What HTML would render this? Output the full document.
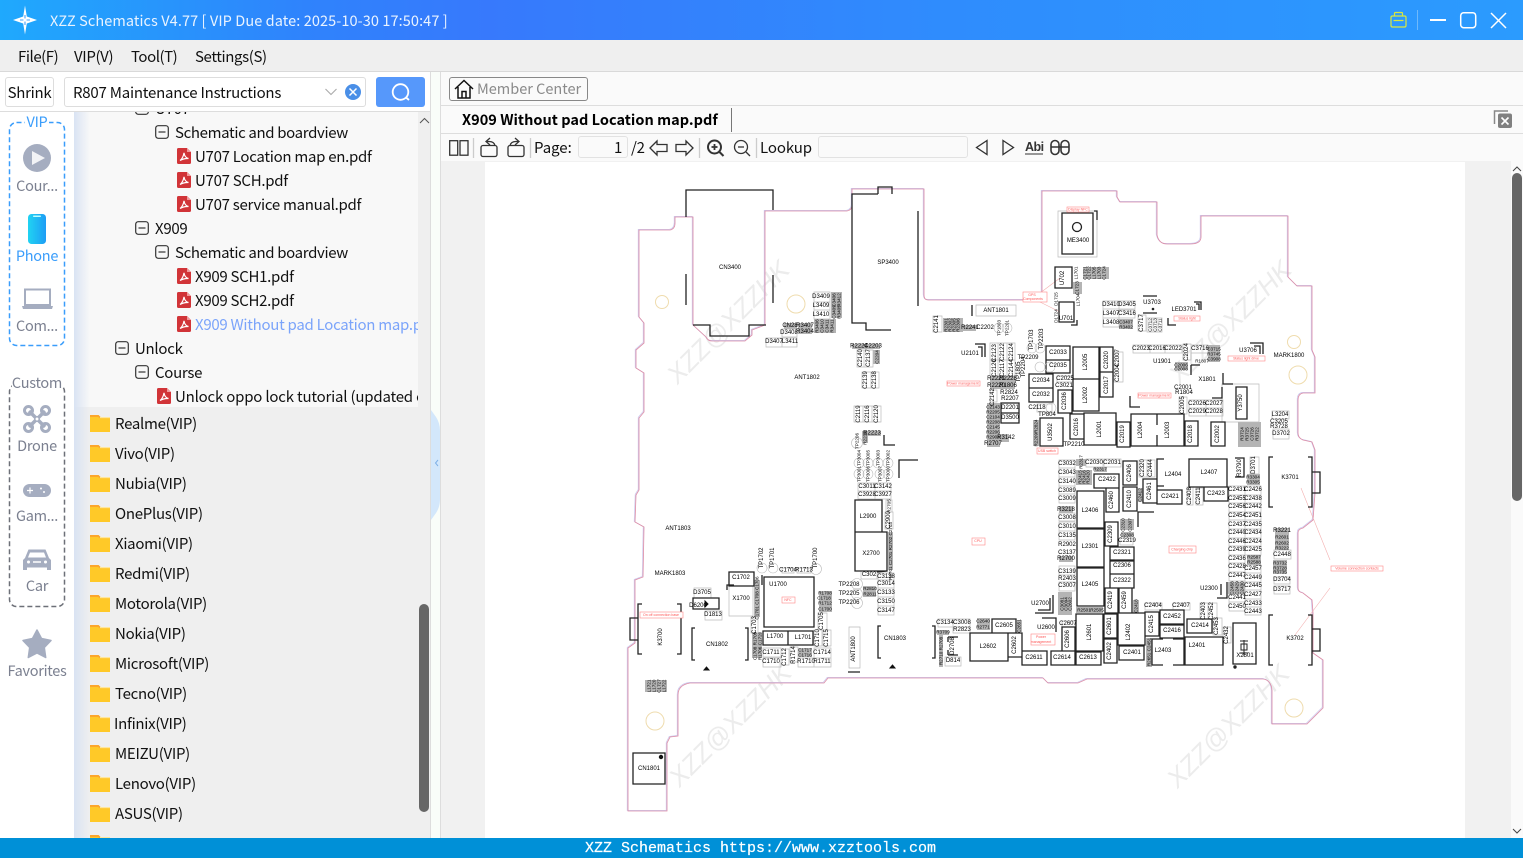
<!DOCTYPE html>
<html lang="en"><head><meta charset="utf-8"><title>XZZ Schematics</title>
<style>
*{box-sizing:border-box}
html,body{margin:0;padding:0;width:1523px;height:858px;overflow:hidden;background:#fafafa}
body{position:relative;font-family:"Noto Sans CJK SC","Liberation Sans",sans-serif;color:#111;font-size:15px;letter-spacing:-.28px}
.a{position:absolute}
.t{position:absolute;white-space:nowrap;line-height:20px;height:20px}
.s{text-align:center;width:74px;left:0;color:#7b8090;font-size:14.5px}
svg{display:block}
#b text{font:6px "Liberation Sans",sans-serif;letter-spacing:0;fill:#000;text-anchor:middle;dominant-baseline:central}
#b text.r{fill:#f55;font-size:3.5px}
#b text.w{font:italic 26px "Liberation Sans",sans-serif;fill:#ececec}
#b text.m{font-size:4.6px}
.k{fill:none;stroke:#222;stroke-width:1.3}
.g{fill:none;stroke:#bbb;stroke-width:.7}
.d{fill:#b4b4b4}
.o{fill:none;stroke:#dd8fa8;stroke-width:.85}
.o2{fill:none;stroke:#c9c8ee;stroke-width:.7}
.c{fill:none;stroke:#efdcae;stroke-width:1}
.rl{fill:#fff;stroke:#f88;stroke-width:.6}
</style></head><body>
<svg width="0" height="0" style="position:absolute"><defs>
<symbol id="pdf" viewBox="0 0 14 16"><path d="M0 1.500Q0 0 1.500 0H10L14 4V14.500Q14 16 12.500 16H1.500Q0 16 0 14.500Z" fill="#d13438"/><path d="M10 0V4H14Z" fill="#f19a9c"/><path d="M3 12.500C5 11 6.500 8 7 4.800C7.500 8 9 10 11.500 10.500C8.500 10.300 5.500 11 3 12.500Z" fill="none" stroke="#fff" stroke-width="1.200"/></symbol>
<symbol id="fo" viewBox="0 0 20 17"><path d="M0 0H8.500L10.500 2H20V17H0Z" fill="#ffc928"/><path d="M0 0H8.500L10.500 2H20V3.200H10L8 2H0Z" fill="#fca62c"/><path d="M10 2H20V3.200H10Z" fill="#ffe79a"/></symbol>
<symbol id="mn" viewBox="0 0 14 14"><rect x=".7" y=".7" width="12.600" height="12.600" rx="2.500" fill="none" stroke="#333" stroke-width="1.200"/><path d="M3.500 7H10.500" stroke="#333" stroke-width="1.200"/></symbol>
<linearGradient id="ph" x1="0" x2="1" y1="0" y2="0"><stop offset="0" stop-color="#20d3f2"/><stop offset="1" stop-color="#1e9df5"/></linearGradient>
</defs></svg>

<!-- title bar -->
<div class="a" style="left:0;top:0;width:1523px;height:40px;background:linear-gradient(90deg,#1fa9fd 0,#2f83fc 20%,#3779fc 32%,#2f8cfd 62%,#2b9bfe 100%)"></div>
<svg class="a" style="left:0;top:0" width="50" height="40"><path d="M25 5.500L26.800 16.500L37 20L26.800 23.500L25 34.500L23.200 23.500L13 20L23.200 16.500Z" fill="#fff"/><path d="M25 15V25M20 20H30" stroke="#4aa0f7" stroke-width="1.100"/><circle cx="25" cy="20" r="1.600" fill="#fff"/></svg>
<div class="t" style="left:50px;top:11px;color:#e9f3ff;font-size:14.5px;letter-spacing:.09px">XZZ Schematics V4.77 [ VIP Due date: 2025-10-30 17:50:47 ]</div>
<svg class="a" style="left:1385px;top:5px" width="130" height="30" viewBox="1385 5 130 30">
<path d="M1391 17.500Q1391 16 1392.500 16H1404.500Q1406 16 1406 17.500V25.500Q1406 27 1404.500 27H1392.500Q1391 27 1391 25.500ZM1394.500 16V13.500Q1394.500 12.500 1395.500 12.500H1401.500Q1402.500 12.500 1402.500 13.500V16M1393.500 20.500H1403.500" fill="none" stroke="#d9e83e" stroke-width="1.200"/>
<path d="M1417.500 10V30" stroke="#6fb9fb"/><path d="M1430 20H1446" stroke="#fff" stroke-width="2"/>
<rect x="1460.700" y="12.700" width="15" height="15" rx="3" fill="none" stroke="#fff" stroke-width="1.500"/>
<path d="M1491 13L1506 28M1506 13L1491 28" stroke="#fff" stroke-width="1.500"/></svg>

<!-- menu -->
<div class="a" style="left:0;top:40px;width:1523px;height:32px;background:#efefef;border-bottom:1px solid #d9d9d9"></div>
<div class="t" style="left:18px;top:47px;letter-spacing:-.45px">File(F)</div><div class="t" style="left:74px;top:47px;letter-spacing:-.35px">VIP(V)</div><div class="t" style="left:131px;top:47px;letter-spacing:-.45px">Tool(T)</div><div class="t" style="left:195px;top:47px;letter-spacing:-.38px">Settings(S)</div>

<!-- left column -->
<div class="a" style="left:0;top:72px;width:431px;height:766px;background:#fff"></div>
<div class="a" style="left:5px;top:77px;width:49px;height:30px;border:1px solid #ddd;border-radius:3px;background:#fff;text-align:center;line-height:30px">Shrink</div>
<div class="a" style="left:64px;top:77px;width:302px;height:30px;border:1px solid #ddd;border-radius:3px;background:#fff"></div>
<div class="t" style="left:73px;top:83px;letter-spacing:-.22px">R807 Maintenance Instructions</div>
<svg class="a" style="left:320px;top:80px" width="45" height="24"><path d="M5.500 9L11 14.500L16.500 9" fill="none" stroke="#aaa" stroke-width="1.100"/><circle cx="33" cy="12" r="8" fill="#4a8fe7"/><path d="M29.500 8.500L36.500 15.500M36.500 8.500L29.500 15.500" stroke="#fff" stroke-width="1.500"/></svg>
<div class="a" style="left:376px;top:77px;width:49px;height:30px;border-radius:3px;background:#5698fb"></div>
<svg class="a" style="left:376px;top:77px" width="49" height="30"><circle cx="24.500" cy="15" r="7.800" fill="none" stroke="#fff" stroke-width="1.800"/><path d="M30 20.500L33 23" stroke="#fff" stroke-width="1.800"/></svg>
<div class="a" style="left:0;top:111px;width:431px;height:1px;background:#ddd"></div>

<!-- list bg -->
<div class="a" style="left:74px;top:112px;width:357px;height:726px;background:#efefef"></div>
<div class="a" style="left:74px;top:112px;width:344px;height:295px;background:#f8f8f8;overflow:hidden">
  <svg class="a" style="left:61px;top:-11px" width="14" height="14"><use href="#mn"/></svg>
  <div class="t" style="left:81px;top:-13px">U707</div>
  <svg class="a" style="left:81px;top:13px" width="14" height="14"><use href="#mn"/></svg><div class="t" style="left:101px;top:11px;letter-spacing:-.35px">Schematic and boardview</div>
  <svg class="a" style="left:103px;top:36px" width="14" height="16"><use href="#pdf"/></svg><div class="t" style="left:121px;top:35px">U707 Location map en.pdf</div>
  <svg class="a" style="left:103px;top:60px" width="14" height="16"><use href="#pdf"/></svg><div class="t" style="left:121px;top:59px">U707 SCH.pdf</div>
  <svg class="a" style="left:103px;top:84px" width="14" height="16"><use href="#pdf"/></svg><div class="t" style="left:121px;top:83px">U707 service manual.pdf</div>
  <svg class="a" style="left:61px;top:109px" width="14" height="14"><use href="#mn"/></svg><div class="t" style="left:81px;top:107px">X909</div>
  <svg class="a" style="left:81px;top:133px" width="14" height="14"><use href="#mn"/></svg><div class="t" style="left:101px;top:131px;letter-spacing:-.35px">Schematic and boardview</div>
  <svg class="a" style="left:103px;top:156px" width="14" height="16"><use href="#pdf"/></svg><div class="t" style="left:121px;top:155px">X909 SCH1.pdf</div>
  <svg class="a" style="left:103px;top:180px" width="14" height="16"><use href="#pdf"/></svg><div class="t" style="left:121px;top:179px">X909 SCH2.pdf</div>
  <svg class="a" style="left:103px;top:204px" width="14" height="16"><use href="#pdf"/></svg><div class="t" style="left:121px;top:203px;color:#7ba4fa">X909 Without pad Location map.pdf</div>
  <svg class="a" style="left:41px;top:229px" width="14" height="14"><use href="#mn"/></svg><div class="t" style="left:61px;top:227px">Unlock</div>
  <svg class="a" style="left:61px;top:253px" width="14" height="14"><use href="#mn"/></svg><div class="t" style="left:81px;top:251px">Course</div>
  <svg class="a" style="left:83px;top:276px" width="14" height="16"><use href="#pdf"/></svg><div class="t" style="left:101px;top:275px;letter-spacing:-.2px">Unlock oppo lock tutorial (updated on 2023)</div>
</div>
<svg class="a" style="left:418px;top:113px" width="13" height="15"><path d="M2 10L6.500 5.500L11 10" fill="none" stroke="#555"/></svg>
<div class="a" style="left:74px;top:112px;width:16px;height:726px;background:linear-gradient(90deg,#d9e3f3,rgba(239,239,239,0))"></div>

<svg class="a" style="left:90px;top:415px" width="20" height="17"><use href="#fo"/></svg><div class="t" style="left:115px;top:414px">Realme(VIP)</div>
<svg class="a" style="left:90px;top:445px" width="20" height="17"><use href="#fo"/></svg><div class="t" style="left:115px;top:444px">Vivo(VIP)</div>
<svg class="a" style="left:90px;top:475px" width="20" height="17"><use href="#fo"/></svg><div class="t" style="left:115px;top:474px">Nubia(VIP)</div>
<svg class="a" style="left:90px;top:505px" width="20" height="17"><use href="#fo"/></svg><div class="t" style="left:115px;top:504px">OnePlus(VIP)</div>
<svg class="a" style="left:90px;top:535px" width="20" height="17"><use href="#fo"/></svg><div class="t" style="left:115px;top:534px">Xiaomi(VIP)</div>
<svg class="a" style="left:90px;top:565px" width="20" height="17"><use href="#fo"/></svg><div class="t" style="left:115px;top:564px">Redmi(VIP)</div>
<svg class="a" style="left:90px;top:595px" width="20" height="17"><use href="#fo"/></svg><div class="t" style="left:115px;top:594px">Motorola(VIP)</div>
<svg class="a" style="left:90px;top:625px" width="20" height="17"><use href="#fo"/></svg><div class="t" style="left:115px;top:624px">Nokia(VIP)</div>
<svg class="a" style="left:90px;top:655px" width="20" height="17"><use href="#fo"/></svg><div class="t" style="left:115px;top:654px">Microsoft(VIP)</div>
<svg class="a" style="left:90px;top:685px" width="20" height="17"><use href="#fo"/></svg><div class="t" style="left:115px;top:684px">Tecno(VIP)</div>
<svg class="a" style="left:90px;top:715px" width="20" height="17"><use href="#fo"/></svg><div class="t" style="left:114px;top:714px">Infinix(VIP)</div>
<svg class="a" style="left:90px;top:745px" width="20" height="17"><use href="#fo"/></svg><div class="t" style="left:115px;top:744px">MEIZU(VIP)</div>
<svg class="a" style="left:90px;top:775px" width="20" height="17"><use href="#fo"/></svg><div class="t" style="left:115px;top:774px">Lenovo(VIP)</div>
<svg class="a" style="left:90px;top:805px" width="20" height="17"><use href="#fo"/></svg><div class="t" style="left:115px;top:804px">ASUS(VIP)</div>
<svg class="a" style="left:90px;top:835px" width="20" height="3" viewBox="0 0 20 3"><use href="#fo" width="20" height="17"/></svg>
<div class="a" style="left:419px;top:604px;width:10px;height:208px;border-radius:5px;background:#666"></div>
<div class="a" style="left:430px;top:72px;width:1px;height:766px;background:#ddd"></div>
<div class="a" style="left:431px;top:72px;width:10px;height:766px;background:#f9fdf9"></div>
<div class="a" style="left:440px;top:72px;width:1px;height:766px;background:#ddd"></div>
<svg class="a" style="left:431px;top:405px" width="10" height="120"><path d="M0 5L5 12Q9 18 9 26V94Q9 102 5 108L0 115Z" fill="#d3e7fb"/><path d="M7 55L4.500 58L7 61" fill="none" stroke="#7fb0e6"/></svg>

<!-- sidebar -->
<div class="a" style="left:0;top:112px;width:74px;height:726px;background:#fff"></div>
<svg class="a" style="left:0;top:112px" width="74" height="726" viewBox="0 112 74 726">
<rect x="9.500" y="122.500" width="55" height="223" rx="7" fill="none" stroke="#3a9dfb" stroke-width="1.500" stroke-dasharray="5 3"/>
<rect x="25" y="116" width="24" height="12" fill="#fff"/>
<rect x="9.500" y="384.500" width="55" height="222" rx="7" fill="none" stroke="#6d7078" stroke-width="1.500" stroke-dasharray="5 3"/>
<rect x="12" y="377" width="50" height="10" fill="#fff"/>
<circle cx="37" cy="158" r="14" fill="#a5adc0"/><path d="M32 151L45 158L32 165Z" fill="#f2f3f6"/>
<rect x="28" y="214" width="18" height="30" rx="3.500" fill="url(#ph)"/><rect x="33" y="215.500" width="8" height="1.500" rx=".7" fill="#bff"/>
<path d="M25 289.500H50V305H25Z" fill="#fff" stroke="#a5adc0" stroke-width="2"/><path d="M22 306H53L52 309H23Z" fill="#a5adc0"/>
<g fill="none" stroke="#a5adc0"><path d="M29 411L45 427M45 411L29 427" stroke-width="3.500"/><circle cx="28.500" cy="410.500" r="4" stroke-width="3"/><circle cx="45.500" cy="410.500" r="4" stroke-width="3"/><circle cx="28.500" cy="427.500" r="4" stroke-width="3"/><circle cx="45.500" cy="427.500" r="4" stroke-width="3"/><circle cx="37" cy="419" r="2.200" stroke-width="1.500" fill="#fff"/></g>
<rect x="23" y="484" width="28" height="13" rx="6.500" fill="#a5adc0"/><path d="M27 490.500H33M30 487.500V493.500" stroke="#fff" stroke-width="1.200"/><circle cx="41" cy="488.500" r="1" fill="#fff"/><circle cx="44" cy="492" r="1" fill="#fff"/>
<path d="M28.500 549.500H45.500L49 558L51 560V570H47V567.500H27V570H23V560L25 558Z" fill="#a5adc0"/><path d="M30 552.500H44L46 557.500H28Z" fill="#fff"/><circle cx="28.500" cy="562" r="1.500" fill="#fff"/><circle cx="45.500" cy="562" r="1.500" fill="#fff"/><path d="M33 562H41" stroke="#fff" stroke-width="1.500"/>
<path d="M37 630L41.500 638.500L51 640.500L44.300 647.500L45.700 657.500L37 653L28.300 657.500L29.700 647.500L23 640.500L32.500 638.500Z" fill="#a5adc0" stroke="#a5adc0" stroke-linejoin="round" stroke-width="1.500"/>
</svg>
<div class="t s" style="top:112px;color:#3a9dfb">VIP</div>
<div class="t s" style="top:176px">Cour...</div>
<div class="t s" style="top:246px;color:#3a9dfb">Phone</div>
<div class="t s" style="top:316px">Com...</div>
<div class="t s" style="top:373px">Custom</div>
<div class="t s" style="top:436px">Drone</div>
<div class="t s" style="top:506px">Gam...</div>
<div class="t s" style="top:576px">Car</div>
<div class="t s" style="top:661px">Favorites</div>

<!-- right panel -->
<div class="a" style="left:441px;top:72px;width:1082px;height:34px;border-bottom:1px solid #ddd;background:#fafafa"></div>
<div class="a" style="left:441px;top:106px;width:1082px;height:28px;border-bottom:1px solid #ddd;background:#fafafa"></div>
<div class="a" style="left:449px;top:77px;width:139px;height:24px;border:1px solid #888;border-radius:3px;background:#fafafa"></div>
<svg class="a" style="left:453px;top:78px" width="22" height="22"><path d="M2 11L11 2.500L20 11M5 9V20H17V9M9 20V13.500H13V20" fill="none" stroke="#111" stroke-width="1.500"/></svg>
<div class="t" style="left:477px;top:79px;color:#8a8a8a;font-size:14.500px;letter-spacing:0">Member Center</div>
<div class="t" style="left:462px;top:110px;font-weight:700;font-size:14.500px;color:#000;letter-spacing:.03px">X909 Without pad Location map.pdf</div>
<div class="a" style="left:731px;top:108px;width:1px;height:24px;background:#777"></div>
<svg class="a" style="left:1492px;top:108px" width="22" height="22"><path d="M2.500 16V3H16" fill="none" stroke="#888" stroke-width="1.500"/><rect x="6" y="5.500" width="14" height="14.500" rx="2" fill="#808080"/><path d="M9.500 9.500L16.500 16.500M16.500 9.500L9.500 16.500" stroke="#fff" stroke-width="1.600"/></svg>

<div class="a" style="left:441px;top:134px;width:1082px;height:27px;background:#fafafa"></div>
<svg class="a" style="left:441px;top:134px" width="640" height="27" viewBox="441 134 640 27" fill="none" stroke="#333" stroke-width="1.300">
<rect x="449.700" y="140.700" width="8" height="14.500"/><rect x="460" y="140.700" width="8" height="14.500"/>
<path d="M473.500 138V158M530.500 138V158M699.500 138V158M756.500 138V158" stroke="#ccc"/>
<rect x="481" y="145.500" width="16" height="11" rx="2"/><path d="M495 145.500Q494 141.500 489 141.500H486M490 138L486 141.500L490 145"/>
<rect x="508" y="145.500" width="16" height="11" rx="2"/><path d="M510 145.500Q511 141.500 516 141.500H519M515 138L519 141.500L515 145"/>
<path d="M650 148L657 141V144.500H667V151.500H657V155Z"/><path d="M693 148L686 141V144.500H676V151.500H686V155Z"/>
<circle cx="714.500" cy="147" r="6.500" stroke-width="2"/><path d="M719.500 152L723.500 156" stroke-width="2"/><path d="M711.500 147H717.500M714.500 144V150" stroke-width="1.800"/>
<circle cx="741" cy="147" r="6.500"/><path d="M746 152L750 156"/><path d="M738 147H744"/>
<path d="M987 140.500L976.500 147.500L987 154.500Z"/><path d="M1003 140.500L1013.500 147.500L1003 154.500Z"/>
<path d="M1025 154H1043" stroke-width="1"/>
<rect x="1051" y="140.500" width="8" height="14" rx="4" stroke-width="1.600"/><rect x="1061" y="140.500" width="8" height="14" rx="4" stroke-width="1.600"/><path d="M1051 147H1069" stroke-width="1.400"/>
</svg>
<div class="t" style="left:534px;top:138px;letter-spacing:-.05px">Page:</div>
<div class="a" style="left:578px;top:136px;width:50px;height:22px;border:1px solid #e2e2e2;border-radius:3px;background:#fafafa;text-align:right;padding-right:5px;line-height:22px">1</div>
<div class="t" style="left:631px;top:138px">/2</div>
<div class="t" style="left:760px;top:138px;letter-spacing:-.1px">Lookup</div>
<div class="a" style="left:818px;top:136px;width:150px;height:22px;border:1px solid #e2e2e2;border-radius:3px;background:#fafafa"></div>
<div class="t" style="left:1025px;top:137px;font:700 12.500px/20px 'Liberation Sans',sans-serif;color:#333;letter-spacing:-.5px">Abi</div>

<!-- canvas -->
<div class="a" style="left:441px;top:161px;width:1082px;height:677px;background:#f1f1f1"></div>
<div class="a" style="left:485px;top:162px;width:980px;height:676px;background:#fff"></div>
<div class="a" style="left:1511px;top:161px;width:12px;height:677px;background:#fafafa"></div>
<svg class="a" style="left:1511px;top:161px" width="12" height="677"><path d="M2 10L6 6L10 10M2 668L6 672L10 668" fill="none" stroke="#444"/></svg>
<div class="a" style="left:1512px;top:173px;width:10px;height:328px;border-radius:5px;background:#666"></div>

<svg id="b" class="a" style="left:0;top:0" width="1523" height="838" viewBox="0 0 1523 838">
<g>
<text class="w" transform="translate(728 322)rotate(-45)">XZZ@XZZHK</text>
<text class="w" transform="translate(1230 322)rotate(-45)">XZZ@XZZHK</text>
<text class="w" transform="translate(730 725)rotate(-45)">XZZ@XZZHK</text>
<text class="w" transform="translate(1228 726)rotate(-45)">XZZ@XZZHK</text>
</g>
<path class="o2" transform="translate(-.8 -.6)" d="M639 230H670Q675 229 675 223V217H693V325L706 337Q708 341 712 341H745L752 335V330L765 325V211H847Q852 210 852 205V189H924V295Q924 300 928 300H1042V191H1117V197L1120 202H1157V235Q1159 244 1167 244H1190Q1201 244 1201 237V216H1288V277L1297 286H1312V350L1315 357V393H1303Q1298 394 1298 400V433Q1298 438 1303 440L1312 442L1315 450V493L1313 520L1303 528Q1298 529 1298 533V588Q1298 592 1303 593L1312 600L1313 613V653L1323 660V708L1307 724H1272V690Q1271 680 1263 679H1087L1078 683H1048L1043 678H828L824 683H690Q678 685 678 695V736L670 737L667 743V811H628V648L635 643V580L643 577L644 527L635 522L636 495L639 490V418L644 412V373L636 368V350L644 343V323L639 317Z"/>
<path class="o" d="M639 230H670Q675 229 675 223V217H693V325L706 337Q708 341 712 341H745L752 335V330L765 325V211H847Q852 210 852 205V189H924V295Q924 300 928 300H1042V191H1117V197L1120 202H1157V235Q1159 244 1167 244H1190Q1201 244 1201 237V216H1288V277L1297 286H1312V350L1315 357V393H1303Q1298 394 1298 400V433Q1298 438 1303 440L1312 442L1315 450V493L1313 520L1303 528Q1298 529 1298 533V588Q1298 592 1303 593L1312 600L1313 613V653L1323 660V708L1307 724H1272V690Q1271 680 1263 679H1087L1078 683H1048L1043 678H828L824 683H690Q678 685 678 695V736L670 737L667 743V811H628V648L635 643V580L643 577L644 527L635 522L636 495L639 490V418L644 412V373L636 368V350L644 343V323L639 317Z"/>
<path d="M1040 293L1060 278M1040 302L1060 312M1301 488L1330 560M1330 588L1295 635" stroke="#f3b0b0" stroke-width=".6" fill="none"/>
<circle class="c" cx="662" cy="302" r="6.500"/><circle class="c" cx="796" cy="304" r="9"/><circle class="c" cx="655" cy="721" r="9"/><circle class="c" cx="1294" cy="342" r="6.500"/><circle class="c" cx="1298" cy="375" r="9"/><circle class="c" cx="1294" cy="708" r="9"/>

<!-- dark mini boxes -->
<path class="d" d="M831 292h11v26h-11zM814 319h22v14h-22zM784 323h13v6h-13zM798 323h14v6h-14zM798 329h14v5h-14zM852 344h15v5h-15zM867 344h13v5h-13zM873 350h7v14h-7zM862 431h19v5h-19zM862 433h6v10h-6zM943 318h20v14h-20zM963 325h13v6h-13zM1083 267h26v12h-26zM1073 282h9v12h-9zM1119 319h14v10h-14zM1208 345h12v17h-12zM1175 362h13v8h-13zM1238 422h23v25h-23zM990 376h25v13h-25zM987 403h13v44h-13zM1000 434h9v8h-9zM1033 420h6v26h-6zM1076 470h16v15h-16zM1076 459h10v7h-10zM1094 467h13v5h-13zM1059 506h14v7h-14zM1059 556h14v6h-14zM1058 592h14v23h-14zM1120 519h14v11h-14zM1121 532h13v5h-13zM1228 582h17v12h-17zM1247 555h14v10h-14zM1273 560h14v14h-14zM1275 528h14v22h-14zM1247 474h13v11h-13zM1138 488h5v14h-5zM1076 607h27v6h-27zM1133 600h6v13h-6zM1146 638h6v29h-6zM752 633h10v25h-10zM754 580h6v37h-6zM819 591h13v21h-13zM798 648h14v9h-14zM863 586h13v11h-13zM888 532h5v38h-5zM645 680h22v12h-22zM937 630h12v5h-12zM939 635h4v32h-4zM977 618h13v12h-13zM1017 620h5v12h-5z"/>

<!-- gray outlines -->
<path class="g" d="M1058 211H1097V257H1058ZM976 305H1016V316H976ZM1222 384H1259V422H1222ZM729 586H753V616H729ZM849 627H860V668H849ZM1103 301h16v8h-16zM1119 301h16v8h-16zM1103 309h16v9h-16zM1119 310h16v8h-16zM1103 318h16v9h-16zM1133 345h17v8h-17zM1150 345h15v8h-15zM1165 345h17v8h-17zM1183 344h8v16h-8zM1191 345h17v8h-17zM1179 397h8v17h-8zM1189 400h17v8h-17zM1206 400h17v8h-17zM1189 408h17v8h-17zM1206 408h17v8h-17zM1272 411h17v8h-17zM1273 429h16v10h-16zM814 292h16v10h-16zM814 302h16v8h-16zM814 310h16v9h-16zM766 338h16v9h-16zM782 338h15v9h-15zM782 329h15v8h-15zM857 350h7v17h-7zM864 350h9v17h-9zM862 372h9v16h-9zM871 372h8v16h-8zM854 406h9v16h-9zM863 406h9v16h-9zM872 406h9v16h-9zM858 483h17v8h-17zM875 483h16v8h-16zM858 491h17v8h-17zM875 491h16v8h-16zM886 500h6v12h-6zM885 512h8v17h-8zM933 316h9v16h-9zM990 343h8v17h-8zM998 343h9v17h-9zM1007 343h8v17h-8zM990 360h8v16h-8zM998 360h9v16h-9zM1007 360h8v16h-8zM990 390h7v12h-7zM1037 404h15v8h-15zM1057 376h16v6h-16zM1114 352h9v30h-9zM1138 315h8v16h-8zM1147 318h5v14h-5zM1152 318h5v14h-5zM1157 318h5v14h-5z"/>
<path class="g" d="M1229 486h16v9h-16zM1229 495h16v8h-16zM1229 503h16v9h-16zM1229 512h16v8h-16zM1229 520h16v9h-16zM1229 529h16v9h-16zM1229 538h16v8h-16zM1229 546h16v9h-16zM1229 555h16v8h-16zM1229 563h16v9h-16zM1229 572h16v9h-16zM1229 594h16v8h-16zM1229 602h16v9h-16zM1245 486h16v9h-16zM1245 495h16v8h-16zM1245 503h16v9h-16zM1245 512h16v8h-16zM1245 520h16v9h-16zM1245 529h16v9h-16zM1245 538h16v8h-16zM1245 546h16v9h-16zM1245 565h16v8h-16zM1245 573h16v9h-16zM1245 582h16v8h-16zM1245 590h16v9h-16zM1245 599h16v8h-16zM1245 607h16v8h-16zM1059 460h16v8h-16zM1059 468h16v9h-16zM1059 477h16v9h-16zM1059 486h16v8h-16zM1059 494h16v9h-16zM1059 513h16v8h-16zM1059 522h16v9h-16zM1059 531h16v9h-16zM1059 566h16v9h-16zM1059 582h16v9h-16zM1086 459h17v8h-17zM1104 459h17v8h-17zM1139 460h8v17h-8zM1147 460h8v17h-8zM1187 487h6v18h-6zM1196 488h7v17h-7zM1250 457h9v17h-9zM1120 538h13v7h-13zM1274 550h17v9h-17zM1274 577h16v7h-16zM1274 586h16v8h-16zM1145 603h17v7h-17zM1173 603h17v7h-17zM1200 603h8v16h-8zM1208 603h9v16h-9zM1213 618h9v17h-9zM1223 627h8v16h-8zM938 619h15v8h-15zM953 619h17v8h-17zM953 627h17v6h-17zM945 657h16v9h-16zM1062 621h13v6h-13z"/>
<path class="g" d="M694 588h17v10h-17zM705 611h17v9h-17zM782 568h12v5h-12zM797 568h14v5h-14zM763 648h18v9h-18zM763 658h18v9h-18zM781 649h8v16h-8zM790 647h8v15h-8zM814 648h17v10h-17zM798 658h16v9h-16zM814 658h17v9h-17zM814 630h8v16h-8zM823 630h8v16h-8zM818 613h9v17h-9zM751 617h7v16h-7zM861 571h16v8h-16zM878 573h16v7h-16zM878 580h16v8h-16zM878 588h16v9h-16zM878 597h16v9h-16zM878 606h16v9h-16z"/>

<!-- black outlines -->
<path class="k" d="M686 217V190H773V210M686 274V305M773 275V303M693 325H710V336H749V325H766M878 194H852V323H866V330H891M878 194V187H892V194M918 211V306M1062 213H1093V254H1062ZM1094 211H1097V220M1055 267H1072V288H1055ZM1059 302H1074V322H1059ZM1077 320V325H1071M972 305V316M1046 346H1070V373H1046ZM1046 360H1070M1073 347H1099V411H1073ZM1073 379H1099M1100 347H1113V397H1100ZM1100 372H1113M1029 374H1053V402H1029ZM1029 388H1053M1058 390H1072V413H1058ZM1001 403H1019V423H1001ZM1001 413H1019M1040 418H1063V446H1040ZM1070 414H1084V439H1070ZM1084 413H1116V445H1084ZM1117 422H1130V447H1117ZM1131 414H1184V446H1131ZM1157 414V425M1157 435V446M1185 421H1198V446H1185ZM1211 422H1225V446H1211ZM1236 387H1247V419H1236ZM1164 459H1157V486H1164M1189 459H1227V487H1189ZM1204 487H1228V501H1204ZM1157 490H1182V504H1157ZM1143 479H1157V503H1143ZM1123 461H1137V485H1123ZM1123 487H1137V511H1123ZM1106 488H1119V512H1106ZM1094 474H1119V488H1094ZM1077 491H1104V528H1077ZM1077 529H1104V567H1077ZM1077 568H1104V606H1077ZM1105 522H1118V546H1105ZM1110 547H1134V560H1110ZM1110 561H1134V574H1110ZM1110 574H1134V588H1110ZM1105 588H1118V613H1105ZM1119 588H1132V613H1119ZM1076 614H1103V651H1076ZM1104 614H1117V638H1104ZM1104 639H1117V663H1104ZM1118 613H1145V645H1118ZM1119 646H1144V660H1119ZM1145 612H1159V636H1145ZM1160 610H1184V624H1160ZM1160 625H1184V638H1160ZM1187 619H1212V633H1187ZM1163 639H1152V665H1163M1173 639H1184V665H1173M1185 637H1223V665H1185ZM1233 623H1256V664H1233ZM992 619H1016V633H992ZM970 633H1008V661H970ZM1008 633H1022V657H1008ZM1022 651H1047V665H1022ZM1051 651H1075V665H1051ZM1076 652H1101V665H1076ZM1062 627H1075V651H1062Z"/>
<path class="k" d="M1273 457H1269V507H1273M1308 457H1312V507H1308M1312 472H1320V493H1312M1273 615H1269V665H1273M1308 615H1312V665H1308M1312 629H1320V651H1312M1217 598H1227V582M1221 595V584M1138 527V512H1154M1035 613H1053V595M1038 610H1050V598M1047 618H1056V632M1042 618H1056M855 500H882V532H855ZM855 532H887V571H855ZM877 572L887 571V563M729 572H754V586H729ZM764 577H814V627H764ZM762 575V585M763 631H813V645H763ZM788 631V645M642 604H638V654H642M677 604H681V654H677M630 618H638V640H630ZM695 628H692V660H695M745 628H748V660H745M881 626H878V658H881M932 626H935V658H932M848 672H860M633 753H665V784H633ZM693 598H719V609H693ZM727 590V585H734M884 435V445H895M899 478V460H918M975 344H985V357M978 347H982V357M1143 296H1157M1143 313H1157M1194 302H1201V310M1196 304H1199V310M1168 318V325H1176M1250 343H1263V354M1254 346H1260V354M1223 373V384H1233M1222 387V398H1212M1130 396V407H1140M1191 365V375M1191 365H1200M948 637H958M948 655H958M948 637V642M948 650V655M1235 458H1244V477H1235"/>
<path d="M705 601L708 604L705 607Z" fill="#111" stroke="#111"/>
<path d="M709 670h-5l2.500-3zM895 668h-5l2.500-3z" fill="#111" stroke="#111" stroke-width="1"/>
<circle cx="1077" cy="227" r="4.500" fill="none" stroke="#222" stroke-width="1.300"/><circle cx="661" cy="757" r="2.200" fill="#111"/><circle cx="1235" cy="667" r="1.700" fill="#222"/><circle cx="1153" cy="309" r="1.300" fill="#222"/>
<path d="M1244 640v16M1241 644h6v6h-6zM1240 641h8M1240 653h8" stroke="#222" fill="none" stroke-width="1"/>

<!-- pale small circles -->
<g fill="none" stroke="#bbb" stroke-width=".6"><circle cx="857" cy="443" r="5.500"/><circle cx="859" cy="463" r="5"/><circle cx="868" cy="463" r="5"/><circle cx="878" cy="463" r="5"/><circle cx="888" cy="463" r="5"/><circle cx="859" cy="474" r="5"/><circle cx="868" cy="474" r="5"/><circle cx="880" cy="474" r="5"/><circle cx="888" cy="474" r="5"/><circle cx="762" cy="568" r="5"/><circle cx="773" cy="568" r="5"/><circle cx="816" cy="569" r="5.500"/><circle cx="857" cy="584" r="5.500"/><circle cx="857" cy="594" r="5.500"/><circle cx="857" cy="603" r="5.500"/><circle cx="1032" cy="348" r="5"/><circle cx="1040" cy="348" r="5"/><circle cx="1040" cy="367" r="5"/><circle cx="1050" cy="367" r="5"/><circle cx="999" cy="328" r="5"/><circle cx="1007" cy="328" r="5"/><circle cx="1051" cy="408" r="5"/></g>

<!-- red labels -->
<rect class="rl" x="1067" y="207" width="22" height="5"/><text class="r" x="1078" y="209.500">Display NFC</text>
<rect class="rl" x="1023" y="292" width="24" height="10"/><text class="r" x="1032" y="295">GPS</text><text class="r" x="1033" y="299">Components</text>
<rect class="rl" x="947" y="381" width="33" height="5"/><text class="r" x="963" y="383.500">Power management</text>
<rect class="rl" x="1174" y="316" width="26" height="5"/><text class="r" x="1187" y="318.500">Status light</text>
<rect class="rl" x="1228" y="356" width="37" height="5"/><text class="r" x="1246" y="358.500">Status light drive</text>
<rect class="rl" x="1138" y="393" width="33" height="5"/><text class="r" x="1154" y="395.500">Power management</text>
<rect class="rl" x="1037" y="448" width="21" height="6"/><text class="r" x="1047" y="451">USB switch</text>
<rect class="rl" x="972" y="538" width="13" height="7"/><text class="r" x="978" y="541">CPU</text>
<rect class="rl" x="1169" y="546" width="27" height="7"/><text class="r" x="1182" y="549.500">Charging chip</text>
<rect class="rl" x="1331" y="566" width="52" height="5"/><text class="r" x="1357" y="568.500">Volume connection contacts</text>
<rect class="rl" x="1031" y="634" width="24" height="11"/><text class="r" x="1041" y="637">Power</text><text class="r" x="1041" y="642">management</text>
<rect class="rl" x="640" y="612" width="43" height="6"/><text class="r" x="661" y="615">On off connection base</text>
<rect class="rl" x="782" y="597" width="13" height="6"/><text class="r" x="788" y="600">NFC</text>

<!-- labels -->
<g>
<text x="730" y="268">CN3400</text><text x="888" y="263">SP3400</text><text x="1078" y="241">ME3400</text><text x="996" y="311">ANT1801</text><text x="807" y="378">ANT1802</text><text x="678" y="529">ANT1803</text><text x="670" y="574">MARK1803</text><text x="1289" y="356">MARK1800</text>
<text x="1058" y="353">C2033</text><text x="1058" y="366">C2035</text><text x="1041" y="381">C2034</text><text x="1041" y="395">C2032</text><text transform="translate(1086 362)rotate(-90)">L2005</text><text transform="translate(1086 395)rotate(-90)">L2002</text><text transform="translate(1107 360)rotate(-90)">C2020</text><text transform="translate(1107 385)rotate(-90)">C2017</text><text transform="translate(1065 401)rotate(-90)">C2036</text><text x="1010" y="408">D2201</text><text x="1010" y="418">D3500</text><text transform="translate(1051 432)rotate(-90)">U3502</text><text transform="translate(1077 427)rotate(-90)">C2016</text><text transform="translate(1100 429)rotate(-90)">L2001</text><text transform="translate(1123 434)rotate(-90)">C2019</text><text transform="translate(1141 430)rotate(-90)">L2004</text><text transform="translate(1168 430)rotate(-90)">L2003</text><text transform="translate(1191 434)rotate(-90)">C2018</text><text transform="translate(1218 434)rotate(-90)">C2002</text><text transform="translate(1241 403)rotate(-90)">Y3750</text>
<text transform="translate(1063 278)rotate(-90)">U702</text><text x="1066" y="319">U701</text><text x="970" y="354">U2101</text><text x="1162" y="362">U1901</text><text x="1152" y="303">U3703</text><text x="1184" y="310">LED3701</text><text x="1248" y="351">U3706</text><text x="1207" y="380">X1801</text>
<text x="1111" y="305">D3410</text><text x="1127" y="305">D3405</text><text x="1111" y="314">L3407</text><text x="1127" y="314">C3416</text><text x="1111" y="323">L3408</text><text x="1141" y="349">C2023</text><text x="1157" y="349">C2016</text><text x="1173" y="349">C2022</text><text x="1200" y="349">C3716</text><text transform="translate(1187 352)rotate(-90)">C2024</text><text x="1197" y="404">C2026</text><text x="1214" y="404">C2027</text><text x="1197" y="412">C2029</text><text x="1214" y="412">C2028</text><text x="1280" y="415">L3204</text><text x="1279" y="422">C3205</text><text x="1279" y="427">R3728</text><text x="1281" y="434">D3702</text><text x="1183" y="388">C2001</text><text x="1184" y="393">R1804</text><text transform="translate(1183 405)rotate(-90)">C2005</text><text x="985" y="328">C2202</text><text x="970" y="328">R2241</text><text x="1028" y="358">TP2209</text><text x="1074" y="445">TP2210</text><text x="1047" y="415">TP804</text><text x="1064" y="386">C3021</text><text x="1065" y="379">C2025</text><text x="1037" y="408">C2118</text>
<text transform="translate(1118 358)rotate(-90)">C2007</text><text transform="translate(1118 373)rotate(-90)">C2004</text><text transform="translate(1032 340)rotate(-90)">TP1703</text><text transform="translate(1042 339)rotate(-90)">TP2203</text><text transform="translate(1019 372)rotate(-90)">TP1805</text><text transform="translate(1024 367)rotate(-90)">TP2204</text><text class="m" transform="translate(999 328)rotate(-90)">TP1803</text><text class="m" transform="translate(1007 328)rotate(-90)">TP2201</text>
<text transform="translate(995 353)rotate(-90)">C2123</text><text transform="translate(1003 352)rotate(-90)">C2122</text><text transform="translate(1012 352)rotate(-90)">C2124</text><text transform="translate(995 368)rotate(-90)">C2120</text><text transform="translate(1003 368)rotate(-90)">C2117</text><text transform="translate(1012 368)rotate(-90)">C2144</text><text x="996" y="379">R2221</text><text x="1008" y="379">R2228</text><text x="996" y="386">R2220</text><text x="1008" y="386">R1806</text><text transform="translate(993 397)rotate(-90)">C2142</text><text x="1009" y="393">R2824</text><text x="1010" y="399">R2207</text><text x="993" y="444">R2707</text><text x="1006" y="438">R3142</text>
<text class="m" x="993" y="407">C2143</text><text class="m" x="993" y="412">R2205</text><text class="m" x="993" y="417">C2104</text><text class="m" x="993" y="422">R2208</text><text class="m" x="993" y="427">C2145</text><text class="m" x="993" y="432">R2206</text><text class="m" x="993" y="437">R2904</text><text class="m" transform="translate(1036 433)rotate(-90)">R2209R2824</text>
<text class="m" transform="translate(946 325)rotate(-90)">R2301</text><text class="m" transform="translate(950 325)rotate(-90)">R2302</text><text class="m" transform="translate(954 325)rotate(-90)">R2305</text><text class="m" transform="translate(958 325)rotate(-90)">R2306</text><text transform="translate(937 324)rotate(-90)">C2141</text>
<text class="m" transform="translate(1076 273)rotate(-90)">L1701</text><text class="m" transform="translate(1085 273)rotate(-90)">C1721</text><text class="m" transform="translate(1089 273)rotate(-90)">C1722</text><text class="m" transform="translate(1094 273)rotate(-90)">L1705</text><text class="m" transform="translate(1099 273)rotate(-90)">L1703</text><text class="m" transform="translate(1104 273)rotate(-90)">C1724</text><text class="m" transform="translate(1077 288)rotate(-90)">C1723</text><text class="m" transform="translate(1078 300)rotate(-90)">L1704</text><text class="m" transform="translate(1056 299)rotate(-90)">D1725</text><text class="m" transform="translate(1056 316)rotate(-90)">D1724</text>
<text transform="translate(1142 323)rotate(-90)">C3717</text><text class="m" transform="translate(1150 325)rotate(-90)">C3712</text><text class="m" transform="translate(1155 325)rotate(-90)">C3713</text><text class="m" transform="translate(1160 325)rotate(-90)">C3711</text><text class="m" x="1126" y="322">C3407</text><text class="m" x="1126" y="327">R3402</text><text class="m" x="1214" y="349">C3715</text><text class="m" x="1214" y="354">R3745</text><text class="m" x="1214" y="359">C3908</text><text class="m" x="1202" y="361">R1807</text><text class="m" x="1181" y="365">C2006</text><text class="m" x="1181" y="369">C2008</text>
<text class="m" transform="translate(1242 434)rotate(-90)">R3724</text><text class="m" transform="translate(1247 434)rotate(-90)">R3725</text><text class="m" transform="translate(1252 434)rotate(-90)">C3726</text><text class="m" transform="translate(1257 434)rotate(-90)">R3722</text>
<text x="1173" y="475">L2404</text><text x="1209" y="473">L2407</text><text x="1216" y="494">C2423</text><text x="1170" y="497">C2421</text><text x="1107" y="480">C2422</text><text x="1090" y="511">L2406</text><text x="1090" y="547">L2301</text><text x="1090" y="585">L2405</text><text x="1122" y="553">C2321</text><text x="1122" y="566">C2306</text><text x="1122" y="581">C2322</text><text x="1172" y="617">C2452</text><text x="1172" y="631">C2416</text><text x="1200" y="626">C2414</text><text x="1163" y="651">L2403</text><text x="1197" y="646">L2401</text><text x="1245" y="656">X2501</text><text x="1132" y="653">C2401</text><text x="1004" y="626">C2605</text><text x="988" y="647">L2602</text><text x="1034" y="658">C2611</text><text x="1062" y="658">C2614</text><text x="1088" y="658">C2613</text><text x="1290" y="478">K3701</text><text x="1295" y="639">K3702</text><text x="1209" y="589">U2300</text><text x="1040" y="604">U2700</text><text x="1046" y="628">U2600</text><text x="1068" y="624">C2607</text>
<text transform="translate(1112 500)rotate(-90)">C2460</text><text transform="translate(1130 473)rotate(-90)">C2406</text><text transform="translate(1130 499)rotate(-90)">C2410</text><text transform="translate(1150 491)rotate(-90)">C2461</text><text transform="translate(1111 534)rotate(-90)">C2309</text><text transform="translate(1111 600)rotate(-90)">C2419</text><text transform="translate(1125 600)rotate(-90)">C2459</text><text transform="translate(1090 632)rotate(-90)">L2601</text><text transform="translate(1110 626)rotate(-90)">C2601</text><text transform="translate(1110 651)rotate(-90)">C2402</text><text transform="translate(1129 632)rotate(-90)">L2402</text><text transform="translate(1152 624)rotate(-90)">C2415</text><text transform="translate(1015 645)rotate(-90)">C2602</text><text transform="translate(1068 639)rotate(-90)">C2606</text>
<text transform="translate(1143 468)rotate(-90)">C2320</text><text transform="translate(1151 468)rotate(-90)">C2444</text><text transform="translate(1190 496)rotate(-90)">C2408</text><text transform="translate(1199 496)rotate(-90)">C2411</text><text transform="translate(1240 468)rotate(-90)">R3790</text><text transform="translate(1254 465)rotate(-90)">D3701</text><text class="m" x="1253" y="477">R3304</text><text class="m" x="1253" y="482">R3305</text><text transform="translate(1204 611)rotate(-90)">C2403</text><text transform="translate(1212 611)rotate(-90)">C2452</text><text transform="translate(1217 626)rotate(-90)">C2453</text><text transform="translate(1227 635)rotate(-90)">C2432</text>
<text x="1237" y="490">C2431</text><text x="1237" y="499">C2455</text><text x="1237" y="507">C2456</text><text x="1237" y="516">C2454</text><text x="1237" y="525">C2437</text><text x="1237" y="533">C2440</text><text x="1237" y="542">C2446</text><text x="1237" y="550">C2439</text><text x="1237" y="559">C2436</text><text x="1237" y="567">C2428</text><text x="1237" y="576">C2447</text><text x="1237" y="598">C2441</text><text x="1237" y="607">C2450</text>
<text x="1253" y="490">C2426</text><text x="1253" y="499">C2438</text><text x="1253" y="507">C2442</text><text x="1253" y="516">C2451</text><text x="1253" y="525">C2435</text><text x="1253" y="533">C2434</text><text x="1253" y="542">C2424</text><text x="1253" y="550">C2425</text><text class="m" x="1254" y="557">R2587</text><text class="m" x="1254" y="562">R2588</text><text x="1253" y="569">C2457</text><text x="1253" y="578">C2449</text><text x="1253" y="586">C2445</text><text x="1253" y="595">C2427</text><text x="1253" y="604">C2433</text><text x="1253" y="612">C2443</text>
<text class="m" transform="translate(1232 588)rotate(-90)">C2458</text><text class="m" transform="translate(1237 588)rotate(-90)">C2429</text><text class="m" transform="translate(1242 588)rotate(-90)">C2430</text>
<text x="1067" y="464">C3032</text><text x="1067" y="473">C3043</text><text x="1067" y="482">C3140</text><text x="1067" y="491">C3089</text><text x="1067" y="499">C3009</text><text x="1066" y="510">R3218</text><text x="1067" y="518">C3008</text><text x="1067" y="527">C3010</text><text x="1067" y="536">C3135</text><text x="1067" y="545">R2902</text><text x="1067" y="553">C3137</text><text x="1066" y="559">R2700</text><text x="1067" y="572">C3139</text><text x="1067" y="579">R2403</text><text x="1067" y="586">C3007</text>
<text class="m" transform="translate(1062 604)rotate(-90)">C3081</text><text class="m" transform="translate(1066 604)rotate(-90)">C3094</text><text class="m" transform="translate(1070 604)rotate(-90)">C2602</text><text class="m" x="1084" y="610">R2501</text><text class="m" x="1097" y="610">R2505</text><text class="m" transform="translate(1136 606)rotate(-90)">C2418</text><text class="m" transform="translate(1149 652)rotate(-90)">R2651 C2451</text>
<text x="1094" y="463">C2030</text><text x="1112" y="463">C2031</text><text class="m" x="1100" y="469">R2317</text><text class="m" transform="translate(1080 477)rotate(-90)">R2415</text><text class="m" transform="translate(1084 477)rotate(-90)">R2416</text><text class="m" transform="translate(1088 477)rotate(-90)">R2420</text><text class="m" transform="translate(1081 462)rotate(-90)">R2317</text>
<text x="1282" y="531">R3221</text><text class="m" x="1282" y="537">R2601</text><text class="m" x="1282" y="543">R2602</text><text class="m" x="1282" y="548">R3222</text><text x="1282" y="555">C2448</text><text class="m" x="1280" y="563">R3732</text><text class="m" x="1280" y="568">R3728</text><text class="m" x="1280" y="572">R3735</text><text x="1282" y="580">D3704</text><text x="1282" y="590">D3717</text><text x="1153" y="606">C2404</text><text x="1181" y="606">C2407</text><text class="m" transform="translate(1140 495)rotate(-90)">C2412</text><text class="m" transform="translate(1123 525)rotate(-90)">C2310</text><text class="m" transform="translate(1130 525)rotate(-90)">C2307</text><text class="m" x="1127" y="535">C2308</text><text x="1127" y="541">C2319</text>
<text x="962" y="623">C3008</text><text x="945" y="623">C3134</text><text x="962" y="630">R2823</text><text class="m" x="943" y="632">R3709</text><text class="m" transform="translate(941 651)rotate(-90)">R2710 R2708</text><text transform="translate(953 646)rotate(-90)">D2708</text><text x="953" y="661">D814</text><text class="m" x="983" y="621">C2640</text><text class="m" x="983" y="627">R2771</text><text class="m" transform="translate(1019 626)rotate(-90)">C2651</text>
<text x="741" y="578">C1702</text><text x="741" y="599">X1700</text><text x="778" y="585">U1700</text><text x="775" y="637">L1700</text><text x="803" y="638">L1701</text><text transform="translate(661 637)rotate(-90)">K3700</text><text x="717" y="645">CN1802</text><text x="895" y="639">CN1803</text><text x="649" y="769">CN1801</text><text transform="translate(854 649)rotate(-90)">ANT1800</text><text x="871" y="554">X2700</text><text x="868" y="517">L2900</text>
<text x="702" y="593">D3705</text><text x="698" y="606">D6200</text><text x="713" y="615">D1813</text><text x="788" y="570.500">C1704</text><text x="804" y="570.500">R1713</text><text x="771" y="653">C1711</text><text x="771" y="662">C1710</text><text x="822" y="653">C1714</text><text x="806" y="662">R1710</text><text x="822" y="662">R1711</text><text class="m" x="825" y="593">R1708</text><text class="m" x="824" y="598">C1718</text><text class="m" x="825" y="603">R1712</text><text class="m" x="825" y="609">C1700</text><text class="m" x="805" y="650">C1717</text><text class="m" x="805" y="655">C1716</text>
<text transform="translate(785 657)rotate(-90)">C1712</text><text transform="translate(794 655)rotate(-90)">R1714</text><text transform="translate(818 638)rotate(-90)">C1710</text><text transform="translate(827 638)rotate(-90)">C1715</text><text transform="translate(822 621)rotate(-90)">C1705</text><text transform="translate(755 625)rotate(-90)">C1703</text><text class="m" transform="translate(757 598)rotate(-90)">C1701 C1708 C1706</text><text class="m" transform="translate(755 646)rotate(-90)">C1708 R1709</text><text class="m" transform="translate(760 646)rotate(-90)">R1706 C1720</text>
<text transform="translate(762 558)rotate(-90)">TP1702</text><text transform="translate(773 558)rotate(-90)">TP1701</text><text transform="translate(816 558)rotate(-90)">TP1700</text>
<text x="849" y="585">TP2208</text><text x="849" y="594">TP2205</text><text x="849" y="603">TP2206</text><text x="886" y="577">C3138</text><text x="886" y="584">C3014</text><text x="886" y="593">C3133</text><text x="886" y="602">C3150</text><text x="886" y="611">C3147</text><text x="869" y="575">C302</text><text class="m" x="870" y="588.500">R2810</text><text class="m" x="870" y="594">R2811</text>
<text class="m" transform="translate(890.500 551)rotate(-90)">R2701 C2701 R2702 C2703</text><text transform="translate(889 520)rotate(-90)">C2900</text><text class="m" transform="translate(889 506)rotate(-90)">R2705</text>
<text x="821" y="297">D3409</text><text x="821" y="306">L3409</text><text x="821" y="315">L3410</text><text x="774" y="342">D3407</text><text x="789" y="333">D3408</text><text x="790" y="342">L3411</text><text x="790" y="326">CN28</text><text x="805" y="326">R3407</text><text x="805" y="332">R3404</text>
<text class="m" transform="translate(834 300)rotate(-90)">C3406</text><text class="m" transform="translate(839 300)rotate(-90)">R3412</text><text class="m" transform="translate(834 312)rotate(-90)">C3409</text><text class="m" transform="translate(839 312)rotate(-90)">R3405</text><text class="m" transform="translate(817 326)rotate(-90)">R3406</text><text class="m" transform="translate(822 326)rotate(-90)">C3410</text><text class="m" transform="translate(827 326)rotate(-90)">C3411</text><text class="m" transform="translate(832 326)rotate(-90)">R3411</text>
<text x="859" y="346.500">R2224</text><text x="873" y="346.500">C2203</text><text transform="translate(861 358)rotate(-90)">C2140</text><text transform="translate(869 358)rotate(-90)">C2137</text><text class="m" transform="translate(877 357)rotate(-90)">C2204</text><text transform="translate(866 380)rotate(-90)">C2139</text><text transform="translate(875 380)rotate(-90)">C2138</text><text transform="translate(859 414)rotate(-90)">C2119</text><text transform="translate(868 414)rotate(-90)">C2116</text><text transform="translate(877 414)rotate(-90)">C2120</text><text x="872" y="433.500">R2223</text><text class="m" transform="translate(865 438)rotate(-90)">R2230</text><text class="m" transform="translate(857 441)rotate(-90)">TP2206</text>
<text x="867" y="487">C3011</text><text x="883" y="487">C3142</text><text x="867" y="495">C3928</text><text x="883" y="495">C3927</text>
<text class="m" transform="translate(859 458)rotate(-90)">TP3004</text><text class="m" transform="translate(868 458)rotate(-90)">TP3005</text><text class="m" transform="translate(878 458)rotate(-90)">TP3003</text><text class="m" transform="translate(888 458)rotate(-90)">TP3002</text><text class="m" transform="translate(859 474)rotate(-90)">TP3001</text><text class="m" transform="translate(868 474)rotate(-90)">TP3006</text><text class="m" transform="translate(880 474)rotate(-90)">TP3007</text><text class="m" transform="translate(888 474)rotate(-90)">TP3000</text>
<text class="m" transform="translate(649 686)rotate(-90)">L1721</text><text class="m" transform="translate(654 686)rotate(-90)">L1720</text><text class="m" transform="translate(659 686)rotate(-90)">C1727</text><text class="m" transform="translate(664 686)rotate(-90)">L1722</text>
</g>
</svg>

<!-- footer -->
<div class="a" style="left:0;top:838px;width:1523px;height:20px;background:#0090d7;color:#fff;font:15px/22px 'Liberation Mono',monospace;letter-spacing:0;white-space:pre;padding-left:585px;-webkit-text-stroke:.2px #fff">XZZ Schematics https://www.xzztools.com</div>
</body></html>
